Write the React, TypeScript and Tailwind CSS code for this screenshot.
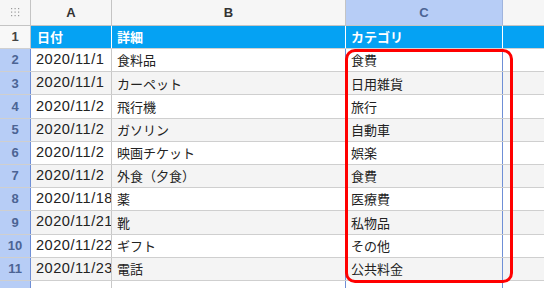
import React from "react"

const rows = [
  ["2020/11/1", "食料品", "食費"],
  ["2020/11/1", "カーペット", "日用雑貨"],
  ["2020/11/2", "飛行機", "旅行"],
  ["2020/11/2", "ガソリン", "自動車"],
  ["2020/11/2", "映画チケット", "娯楽"],
  ["2020/11/2", "外食（夕食）", "食費"],
  ["2020/11/18", "薬", "医療費"],
  ["2020/11/21", "靴", "私物品"],
  ["2020/11/22", "ギフト", "その他"],
  ["2020/11/23", "電話", "公共料金"],
]

const jp = { fontFamily: '"Noto Sans CJK JP", "Noto Sans", sans-serif' }
const latin = { fontFamily: '"Liberation Sans", Arial, sans-serif' }

function Grip() {
  return (
    <svg width="9" height="9" viewBox="0 0 9 9">
      {[0, 1, 2].map((r) =>
        [0, 1, 2].map((c) => <rect key={`${r}-${c}`} x={c * 3.5} y={r * 3.5} width="1.2" height="1.2" fill="#9a9a9a" />)
      )}
    </svg>
  )
}

export default function App() {
  return (
    <div className="relative w-[544px] h-[288px] overflow-hidden bg-white text-[#222]" style={latin}>
      {/* column headers */}
      <div className="flex h-[26px] border-b border-[#c4c4c4] bg-[#f6f6f6] text-[13px] font-bold text-[#333]">
        <div className="w-[31px] shrink-0 border-r border-[#c4c4c4] flex items-center justify-center">
          <Grip />
        </div>
        <div className="w-[81px] shrink-0 border-r border-[#c4c4c4] flex items-center justify-center">A</div>
        <div className="w-[234px] shrink-0 border-r border-[#c4c4c4] flex items-center justify-center">B</div>
        <div className="w-[157px] shrink-0 border-r border-[#9fb4de] bg-[#b7cdf6] text-[#4c6494] flex items-center justify-center">C</div>
        <div className="flex-1" />
      </div>

      {/* header row 1 */}
      <div className="flex h-[23px] border-b border-[#d0d0d0] text-[13px]">
        <div className="w-[31px] shrink-0 border-r border-[#c4c4c4] bg-[#f8f8f8] font-bold text-[#444] flex items-center justify-center">1</div>
        <div className="flex flex-1 bg-[#05a2f3] font-bold text-white" style={jp}>
          <div className="w-[81px] shrink-0 border-r border-white flex items-center pl-[6px]">日付</div>
          <div className="w-[234px] shrink-0 border-r border-white flex items-center pl-[5px]">詳細</div>
          <div className="w-[157px] shrink-0 border-r border-white flex items-center pl-[5px]">カテゴリ</div>
          <div className="flex-1" />
        </div>
      </div>

      {/* data rows */}
      {rows.map(([date, detail, cat], i) => (
        <div
          key={i}
          className={`flex h-[23.2px] border-b border-[#cfcfcf] ${i % 2 === 1 ? "bg-[#f4f4f4]" : "bg-white"}`}
        >
          <div className="w-[31px] shrink-0 border-r border-[#6f8fd6] bg-[#b7cdf6] text-[13px] font-bold text-[#4c6494] flex items-center justify-center">
            {i + 2}
          </div>
          <div className="w-[81px] shrink-0 border-r border-[#c8c8c8] flex items-center pl-[5px] overflow-hidden whitespace-nowrap text-[14.6px] tracking-[0.5px]">
            {date}
          </div>
          <div className="w-[234px] shrink-0 border-r border-[#6f8fd6] flex items-center pl-[5px] text-[13px]" style={jp}>
            {detail}
          </div>
          <div className="w-[157px] shrink-0 border-r border-[#6f8fd6] flex items-center pl-[5px] text-[13px]" style={jp}>
            {cat}
          </div>
          <div className="flex-1" />
        </div>
      ))}

      {/* partial row 12 */}
      <div className="flex h-[23px] bg-white">
        <div className="w-[31px] shrink-0 border-r border-[#6f8fd6] bg-[#b7cdf6]" />
        <div className="w-[81px] shrink-0 border-r border-[#c8c8c8]" />
        <div className="w-[234px] shrink-0 border-r border-[#6f8fd6]" />
        <div className="w-[157px] shrink-0 border-r border-[#6f8fd6]" />
        <div className="flex-1" />
      </div>

      {/* highlight */}
      <div className="absolute left-[345px] top-[49px] w-[168px] h-[234px] border-[3px] border-[#ff0000] rounded-[10px] pointer-events-none" />
    </div>
  )
}
